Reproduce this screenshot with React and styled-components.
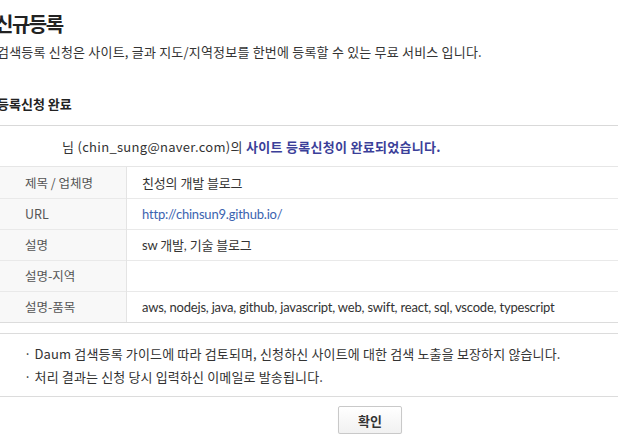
import React from "react";
import styled, { createGlobalStyle } from "styled-components";

const GlobalStyle = createGlobalStyle`
  html, body {
    margin: 0;
    padding: 0;
    background: #fff;
    overflow: hidden;
  }
  body {
    font-family: "Lato", "Noto Sans CJK KR", sans-serif;
    color: #333;
  }
`;

const rows = [
  { label: "제목 / 업체명", value: "친성의 개발 블로그" },
  { label: "URL", value: "http://chinsun9.github.io/", link: true },
  { label: "설명", value: "sw 개발, 기술 블로그" },
  { label: "설명-지역", value: "" },
  {
    label: "설명-품목",
    value:
      "aws, nodejs, java, github, javascript, web, swift, react, sql, vscode, typescript",
  },
];

const notices = [
  "Daum 검색등록 가이드에 따라 검토되며, 신청하신 사이트에 대한 검색 노출을 보장하지 않습니다.",
  "처리 결과는 신청 당시 입력하신 이메일로 발송됩니다.",
];

const App = () => {
  return (
    <Page>
      <GlobalStyle />
      <Title>신규등록</Title>
      <Desc>
        검색등록 신청은 사이트, 글과 지도/지역정보를 한번에 등록할 수 있는 무료
        서비스 입니다.
      </Desc>

      <SectionTitle>등록신청 완료</SectionTitle>

      <ResultBox>
        <Message>
          님 (chin_sung@naver.com)의 <strong>사이트 등록신청이 완료되었습니다.</strong>
        </Message>
        <InfoTable>
          <tbody>
            {rows.map((row) => (
              <tr key={row.label}>
                <Label>{row.label}</Label>
                <Value link={row.link}>{row.value}</Value>
              </tr>
            ))}
          </tbody>
        </InfoTable>
      </ResultBox>

      <NoticeBox>
        {notices.map((text) => (
          <Notice key={text}>· {text}</Notice>
        ))}
      </NoticeBox>

      <ButtonRow>
        <ConfirmButton type="button">확인</ConfirmButton>
      </ButtonRow>
    </Page>
  );
};

export default App;

const Page = styled.div`
  width: 623px;
  margin-left: -5px;
`;

const Title = styled.h1`
  margin: 0;
  padding-top: 11px;
  height: 30px;
  font-family: "Noto Sans CJK KR", sans-serif;
  font-size: 20px;
  line-height: 26px;
  font-weight: 700;
  letter-spacing: -1.5px;
  color: #222;
`;

const Desc = styled.p`
  margin: 0;
  padding-top: 1px;
  padding-left: 2px;
  font-family: "Noto Sans CJK KR", sans-serif;
  font-size: 13px;
  letter-spacing: 0.2px;
  line-height: 20px;
  color: #333;
`;

const SectionTitle = styled.h2`
  margin: 32px 0 0;
  padding-left: 2px;
  height: 31px;
  font-family: "Noto Sans CJK KR", sans-serif;
  font-size: 13px;
  line-height: 20px;
  font-weight: 700;
  color: #222;
`;

const ResultBox = styled.div`
  border-top: 1px solid #d9d9d9;
  border-bottom: 1px solid #dcdcdc;
`;

const Message = styled.p`
  margin: 0;
  height: 40px;
  padding-left: 67px;
  border-bottom: 1px solid #e6e6e6;
  font-family: "Noto Sans CJK KR", sans-serif;
  font-size: 13px;
  letter-spacing: 0.3px;
  line-height: 41px;
  color: #333;

  strong {
    color: #3b3f99;
    font-weight: 700;
  }
`;

const InfoTable = styled.table`
  width: 100%;
  border-collapse: collapse;
  font-size: 13px;

  tr:first-child td {
    height: 31px;
  }

  tr + tr td {
    border-top: 1px solid #e9e9e9;
  }
`;

const Label = styled.td`
  width: 101px;
  height: 30px;
  padding: 0 0 0 30px;
  background: #f8f8f8;
  border-right: 1px solid #e4e4e4;
  color: #555;
  font-family: "Noto Sans CJK KR", sans-serif;
  font-size: 12.5px;
  line-height: 30px;
`;

const Value = styled.td`
  height: 30px;
  padding: 0 0 0 15px;
  color: ${(props) => (props.link ? "#3b63b0" : "#333")};
  font-family: "Lato", "Noto Sans CJK KR", sans-serif;
  letter-spacing: -0.2px;
  line-height: 30px;
  white-space: nowrap;
`;

const NoticeBox = styled.div`
  margin-top: 10px;
  padding: 8px 0 8px 29px;
  border-top: 1px solid #dcdcdc;
  border-bottom: 1px solid #dcdcdc;
`;

const Notice = styled.p`
  margin: 0;
  font-family: "Noto Sans CJK KR", sans-serif;
  font-size: 13px;
  letter-spacing: 0.15px;
  line-height: 23px;
  color: #333;
`;

const ButtonRow = styled.div`
  padding: 9px 0 0 343px;
`;

const ConfirmButton = styled.button`
  width: 64px;
  height: 28px;
  padding: 0;
  border: 1px solid #c9c9c9;
  border-radius: 2px;
  background: linear-gradient(#ffffff, #f1f1f1);
  box-shadow: 0 1px 1px rgba(0, 0, 0, 0.08);
  font-family: "Noto Sans CJK KR", sans-serif;
  font-size: 13px;
  font-weight: 700;
  color: #333;
`;
